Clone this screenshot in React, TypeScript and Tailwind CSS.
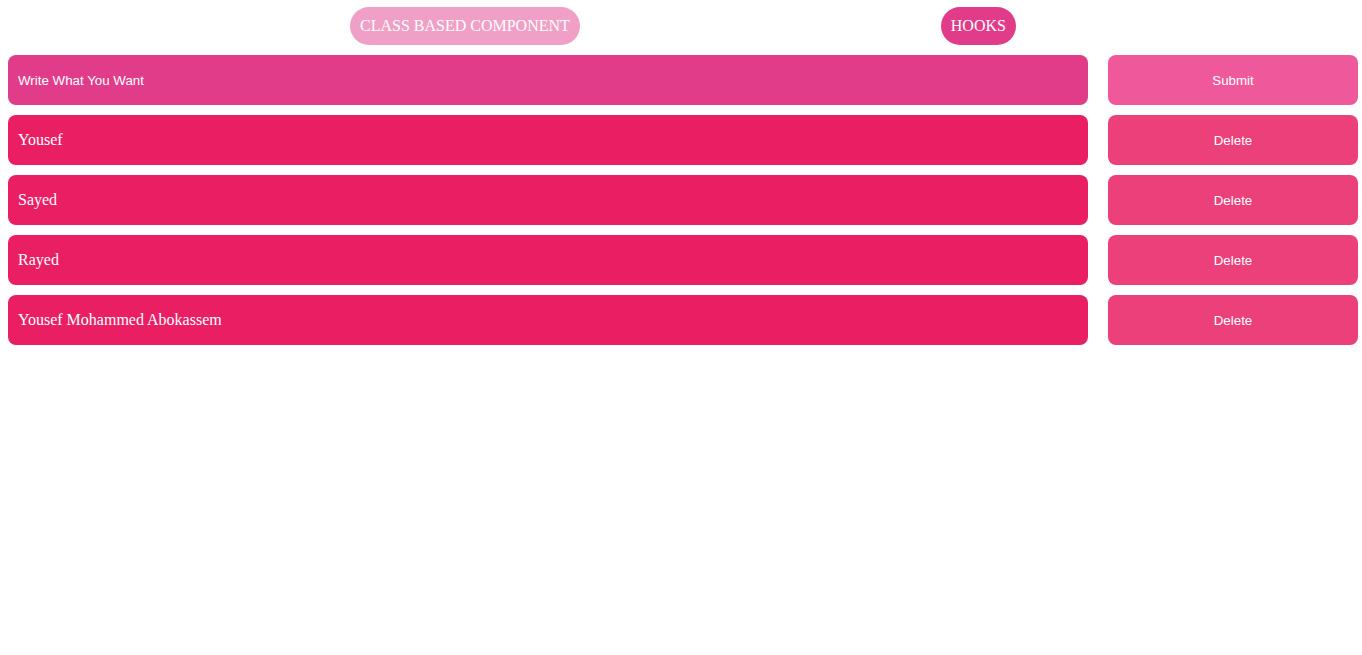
const names = ["Yousef", "Sayed", "Rayed", "Yousef Mohammed Abokassem"];

export default function App() {
  return (
    <div className="min-h-screen bg-white font-['Liberation_Serif',serif] text-white">
      <div className="flex items-center pt-[7px] pl-[350px] gap-[361px]">
        <button className="h-[38px] rounded-full bg-[#f0a0c6] px-[10px] text-base">
          CLASS BASED COMPONENT
        </button>
        <button className="h-[38px] rounded-full bg-[#e13c89] px-[10px] text-base">
          HOOKS
        </button>
      </div>
      <div className="mt-[10px] flex flex-col gap-[10px] pl-2 pr-1">
        <div className="flex gap-5">
          <input
            placeholder="Write What You Want"
            className="h-[50px] flex-1 rounded-lg bg-[#e13c89] px-[10px] font-['Liberation_Sans',sans-serif] text-[13.33px] text-white outline-none placeholder:text-white"
          />
          <button className="h-[50px] w-[250px] rounded-lg bg-[#ef589b] pt-px font-['Liberation_Sans',sans-serif] text-[13.33px]">
            Submit
          </button>
        </div>
        {names.map((n) => (
          <div key={n} className="flex gap-5">
            <div className="flex h-[50px] flex-1 items-center rounded-lg bg-[#e91e63] px-[10px] text-base">
              {n}
            </div>
            <button className="h-[50px] w-[250px] rounded-lg bg-[#ec407a] pt-px font-['Liberation_Sans',sans-serif] text-[13.33px]">
              Delete
            </button>
          </div>
        ))}
      </div>
    </div>
  );
}
